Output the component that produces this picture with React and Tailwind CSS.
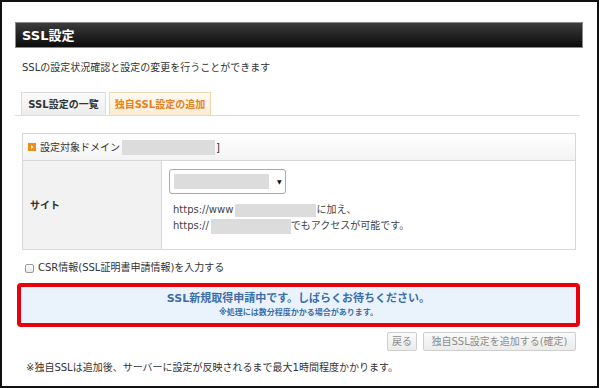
import React from 'react';

const font = { fontFamily: '"DejaVu Sans", "Noto Sans CJK JP", sans-serif' };

// gray redaction block
const Mask = ({ className = '' }) => (
  <span className={`inline-block bg-[#dcdcdc] align-middle ${className}`} />
);

const OrangeMark = () => (
  <svg width="8" height="8" viewBox="0 0 8 8" className="shrink-0">
    <rect x="0" y="0" width="8" height="8" fill="#f08c1a" />
    <path d="M3 2 L5.5 4 L3 6 Z" fill="#fff" />
  </svg>
);

export default function App() {
  return (
    <div className="w-[600px] h-[388px] bg-white">
      <div
        className="w-[599px] h-[388px] border-2 border-[#111] bg-white pt-[20px] pl-[13px] pr-[14px] text-[#333]"
        style={font}
      >
        {/* title bar */}
        <div className="h-[26px] border border-[#8a8a8a] bg-gradient-to-b from-[#3c3c3c] to-[#0c0c0c] flex items-center pl-[6px]">
          <span className="text-white font-bold text-[13px] leading-none">SSL設定</span>
        </div>

        <p className="mt-[12px] ml-[7px] text-[10px] leading-[16px]">
          SSLの設定状況確認と設定の変更を行うことができます
        </p>

        {/* tabs */}
        <div className="mt-[16px] flex items-end gap-[3px] pl-[6px] border-b border-[#dcdcdc] w-[565px]">
          <div className="h-[23px] w-[85px] border border-b-0 border-[#dcdcdc] bg-gradient-to-b from-[#fbfbfb] to-[#ececec] flex items-center justify-center text-[10px] font-bold text-[#333]">
            SSL設定の一覧
          </div>
          <div className="h-[23px] w-[102px] border border-b-0 border-[#f1d6b3] bg-gradient-to-b from-[#fffaf3] to-[#fcebd3] flex items-center justify-center text-[10px] font-bold text-[#e5821f]">
            独自SSL設定の追加
          </div>
        </div>

        {/* panel */}
        <div className="mt-[17px] ml-[7px] w-[554px] border border-[#d8d8d8]">
          <div className="h-[27px] border-b border-[#d8d8d8] bg-gradient-to-b from-[#ffffff] to-[#f3f3f3] flex items-center pl-[5px] text-[10px]">
            <OrangeMark />
            <span className="ml-[4px]">設定対象ドメイン</span>
            <Mask className="w-[93px] h-[15px] ml-[2px]" />
            <span className="ml-[1px]">]</span>
          </div>
          <div className="flex h-[88px]">
            <div className="w-[139px] bg-[#f2f2f2] border-r border-[#d8d8d8] flex items-center pl-[7px] text-[10px] font-bold">
              サイト
            </div>
            <div className="flex-1 pl-[7px] pt-[8px]">
              <div className="w-[117px] h-[25px] border border-[#a9a9a9] rounded-[3px] bg-white flex items-center pl-[4px]">
                <Mask className="w-[95px] h-[15px]" />
                <span className="ml-[8px] text-[6px] text-[#111] leading-none">▼</span>
              </div>
              <div className="mt-[8px] ml-[4px] text-[10px] leading-[16px] text-[#444]">
                <div className="flex items-center">
                  <span>https://www</span>
                  <Mask className="w-[81px] h-[13px] ml-[2px]" />
                  <span>に加え、</span>
                </div>
                <div className="flex items-center">
                  <span>https://</span>
                  <Mask className="w-[80px] h-[15px] ml-[2px]" />
                  <span>でもアクセスが可能です。</span>
                </div>
              </div>
            </div>
          </div>
        </div>

        {/* checkbox */}
        <label className="mt-[10px] ml-[10px] flex items-center gap-[4px] text-[10px] leading-[16px]">
          <span className="w-[9px] h-[9px] border border-[#9a9a9a] rounded-[2px] bg-gradient-to-b from-white to-[#e8e8e8]" />
          <span>CSR情報(SSL証明書申請情報)を入力する</span>
        </label>

        {/* status box */}
        <div className="mt-[7px] ml-[2px] w-[563px] h-[44px] border-[4px] border-[#e8000b] rounded-[4px] bg-[#eaf3fc] flex flex-col items-center justify-center">
          <div className="text-[11px] font-bold text-[#3d6ea8] leading-[14px]">
            SSL新規取得申請中です。しばらくお待ちください。
          </div>
          <div className="text-[8px] font-bold text-[#3d6ea8] leading-[11px] mt-[1px]">
            ※処理には数分程度かかる場合があります。
          </div>
        </div>

        {/* buttons */}
        <div className="mt-[5px] mr-[7px] flex justify-end gap-[6px]">
          <div className="h-[19px] w-[30px] border border-[#cfcfcf] rounded-[2px] bg-gradient-to-b from-[#fafafa] to-[#ebebeb] flex items-center justify-center text-[10px] text-[#8c8c8c]">
            戻る
          </div>
          <div className="h-[19px] w-[153px] border border-[#cfcfcf] rounded-[2px] bg-gradient-to-b from-[#fafafa] to-[#ebebeb] flex items-center justify-center text-[10px] text-[#8c8c8c]">
            独自SSL設定を追加する(確定)
          </div>
        </div>

        <p className="mt-[9px] ml-[11px] text-[10px] leading-[16px]">
          ※独自SSLは追加後、サーバーに設定が反映されるまで最大1時間程度かかります。
        </p>
      </div>
    </div>
  );
}
